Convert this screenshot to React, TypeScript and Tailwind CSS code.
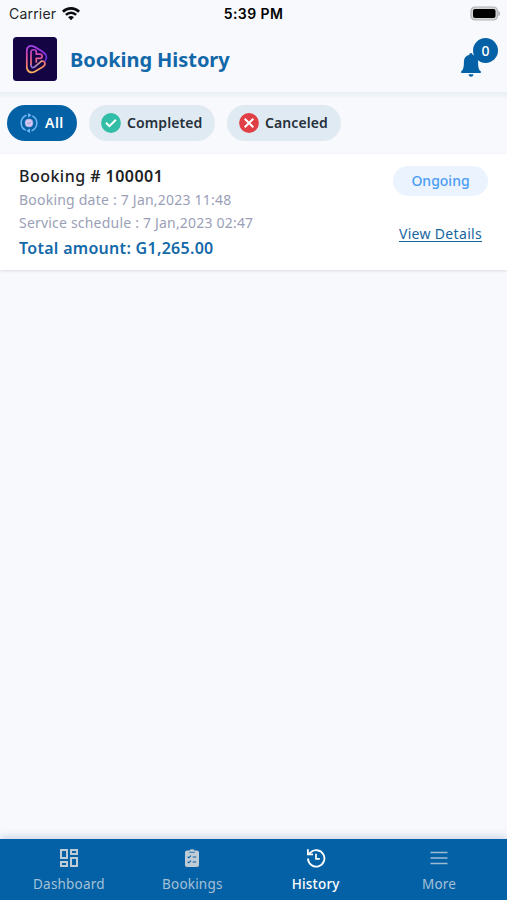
import type { ReactNode } from "react";
import { MdOutlineDashboard } from "react-icons/md";

function Wifi() {
  return (
    <svg className="h-[14px] w-[18px]" viewBox="0 0 18 14" fill="none" stroke="#0b0c0e" strokeWidth="2.6">
      <path d="M.9 4.700C5.500.2 12.500.2 17.100 4.700" />
      <path d="M3.900 7.900C6.800 5 11.200 5 14.100 7.900" />
      <path d="M9 13.200 6.100 10.300C7.800 8.700 10.200 8.700 11.900 10.300Z" fill="#0b0c0e" stroke="none" />
    </svg>
  );
}

function Battery() {
  return (
    <svg className="h-[15px] w-[31px]" viewBox="0 0 31 15">
      <rect x="1" y="1" width="26.5" height="13" rx="4" fill="#d4d5d7" stroke="#b1b3b6" strokeWidth="1.200" />
      <rect x="3" y="3" width="22.500" height="9" rx="2" fill="#000" />
      <path d="M28.800 5.200q1.800 2.300 0 4.600Z" fill="#a7a9ac" stroke="#a7a9ac" strokeWidth=".6" />
    </svg>
  );
}

function Logo() {
  return (
    <svg className="h-11 w-11" viewBox="0 0 44 44" fill="none">
      <defs>
        <linearGradient id="brand" x1="20" y1="8" x2="20" y2="36" gradientUnits="userSpaceOnUse">
          <stop stopColor="#9a40ee" />
          <stop offset=".35" stopColor="#d94ab0" />
          <stop offset=".7" stopColor="#f07a70" />
          <stop offset="1" stopColor="#fbb85c" />
        </linearGradient>
        <linearGradient id="edge" x1="24" y1="12" x2="32" y2="25" gradientUnits="userSpaceOnUse">
          <stop stopColor="#a83be8" />
          <stop offset="1" stopColor="#5a34d8" />
        </linearGradient>
        <linearGradient id="curl" x1="19" y1="28" x2="32" y2="26" gradientUnits="userSpaceOnUse">
          <stop stopColor="#8a6fd8" />
          <stop offset="1" stopColor="#fbb060" />
        </linearGradient>
      </defs>
      <rect width="44" height="44" rx="3.500" fill="#150443" />
      <g strokeWidth="1.700" strokeLinecap="round" strokeLinejoin="round">
        <path d="M21.500 9.800 29 14.200C33.500 17 34.300 20.500 32.500 23.500" stroke="url(#edge)" />
        <path d="M21.500 9.800C17.500 7.500 13.800 9.500 13.800 14V29.500C13.800 35 18 36.700 22 34.400L30 29.700C33.500 27.400 31.800 23.300 28.500 24.200" stroke="url(#brand)" />
        <path d="M18 28V15C18 12 23.300 12 23.300 15V17.200H27C29.800 17.200 29.800 21.300 27 21.300H23.300V25" stroke="url(#brand)" />
        <path d="M18 28C18 30.800 20 31 21.500 30L28.500 24.200" stroke="url(#curl)" />
      </g>
    </svg>
  );
}

function Bell() {
  return (
    <svg className="h-6 w-5" viewBox="0 0 20 24" fill="#0461a5">
      <path d="M10 0c1 0 1.600.7 1.600 1.800 3.600.8 5.500 3.500 5.500 7.100 0 5.100.6 8 2.700 9.300V20H.2v-1.800C2.300 16.900 2.900 14 2.900 8.900c0-3.600 1.900-6.300 5.500-7.100C8.400.7 9 0 10 0ZM7.500 21.200h5c-.3 1.700-1.200 2.500-2.500 2.500s-2.200-.8-2.500-2.500Z" />
    </svg>
  );
}

function AllIcon() {
  return (
    <svg className="h-5 w-5" viewBox="0 0 20 20" fill="none" stroke="#71b9f5" strokeWidth="1.500">
      <path d="M7.500 2.200a8.200 8.200 0 0 0-.8 15M12.500 17.800a8.200 8.200 0 0 0 .8-15" />
      <path d="M9 0v4.600l3.600-2.300ZM11 20v-4.600l-3.600 2.300Z" fill="#71b9f5" stroke="none" />
      <circle cx="10" cy="10" r="3.900" fill="#d9c8ee" stroke="#a6b4ec" strokeWidth=".8" />
      <path d="m8.400 10 1.200 1.200 2.100-2.400" stroke="#8a86cf" strokeWidth=".9" />
    </svg>
  );
}

function CheckIcon() {
  return (
    <svg className="h-5 w-5" viewBox="0 0 20 20" fill="none">
      <circle cx="10" cy="10" r="9.900" fill="#32bea6" />
      <path d="m5 9.800 3.400 3.300 6.500-6.300" stroke="#fff" strokeWidth="2" />
    </svg>
  );
}

function CrossIcon() {
  return (
    <svg className="h-5 w-5" viewBox="0 0 20 20" fill="none">
      <circle cx="10" cy="10" r="9.900" fill="#e04045" />
      <path d="m5.700 5.700 8.600 8.600m0-8.600-8.600 8.600" stroke="#fff" strokeWidth="2" />
    </svg>
  );
}

function ClipboardIcon() {
  return (
    <svg className="h-[18px] w-[14px]" viewBox="0 0 14 18" fill="none">
      <path d="M2 1.500h2.500C5-.1 9-.1 9.500 1.500H12a2 2 0 0 1 2 2V16a2 2 0 0 1-2 2H2a2 2 0 0 1-2-2V3.500a2 2 0 0 1 2-2Z" fill="#bfcbd5" />
      <path d="M4.300 3.300h5.400" stroke="#0461a5" strokeWidth=".8" />
      <path d="m2.600 7.700 1.200 1.100L6 6.600M2.600 12.700l1.200 1.100L6 11.600M7.700 8h3.500M7.700 13h3.500" stroke="#0461a5" strokeWidth="1.100" />
    </svg>
  );
}

function HistoryIcon() {
  return (
    <svg className="h-5 w-5" viewBox="0 0 20 20" fill="none" stroke="#fff" strokeWidth="1.800">
      <path d="M2 10.500A8.200 8.200 0 1 0 4.300 4.700L2.800 6.200" />
      <path d="M1.900 1.300V6.400H7" />
      <path d="M10 5.800v5.100h3.800" strokeWidth="1.700" />
    </svg>
  );
}

function MenuIcon() {
  return (
    <svg className="h-5 w-[18px]" viewBox="0 0 18 20" stroke="#9dbbd3" strokeWidth="1.500">
      <path d="M.5 4.500h17M.5 10h17M.5 15.500h17" />
    </svg>
  );
}

function Chip({ className, icon, children }: { className: string; icon: ReactNode; children: ReactNode }) {
  return (
    <button className={`flex h-9 shrink-0 items-center rounded-full pl-3 text-[14px] font-semibold ${className}`}>
      {icon}
      <span className="ml-[6px] pb-px whitespace-nowrap">{children}</span>
    </button>
  );
}

function NavItem({ className = "text-[#a5c0d6]", icon, children }: { className?: string; icon: ReactNode; children: ReactNode }) {
  return (
    <a className={`flex w-[123.4px] flex-col items-center pt-[7px] text-[13.5px] tracking-[0.2px] ${className}`}>
      <span className="flex h-6 items-center pl-px">{icon}</span>
      <span className="mt-1 pl-px leading-5">{children}</span>
    </a>
  );
}

export default function App() {
  return (
    <div className="flex h-[900px] w-[507px] flex-col overflow-hidden bg-[#f7f9fd] font-['Noto_Sans',sans-serif]">
      <div className="grid h-7 shrink-0 grid-cols-3 items-center pr-[6px] pb-px pl-[9px] font-['Inter',sans-serif] text-[14px] text-[#24262a]">
        <div className="flex items-center gap-[6px]">
          <span className="tracking-[0.2px]">Carrier</span>
          <Wifi />
        </div>
        <span className="pr-[3px] text-center font-semibold tracking-[0.4px] text-black">5:39 PM</span>
        <div className="flex justify-end">
          <Battery />
        </div>
      </div>

      <header className="flex h-16 shrink-0 items-center pr-[9px] pb-[2px] pl-[13px]">
        <Logo />
        <h1 className="ml-[13px] pt-px text-[20px] font-bold tracking-[-0.05px] text-[#1267a9]">Booking History</h1>
        <div className="relative ml-auto h-10 w-[37px]">
          <div className="absolute bottom-[2px] left-0">
            <Bell />
          </div>
          <span className="absolute -top-px right-0 flex h-[25px] w-[25px] items-center justify-center rounded-full bg-[#0461a5] pb-px text-[14px] font-medium text-white">
            0
          </span>
        </div>
      </header>
      <div className="h-[6px] shrink-0 bg-linear-to-b from-[#eaeff4] to-[#f4f7fb]" />

      <div className="flex h-14 shrink-0 items-start gap-3 pt-[7px] pl-[7px]">
        <Chip className="w-[70px] bg-[#0461a5] tracking-[0.5px] text-white" icon={<AllIcon />}>All</Chip>
        <Chip className="w-[126px] bg-[#dfeaf3] tracking-[0.1px] text-[#26303a]" icon={<CheckIcon />}>Completed</Chip>
        <Chip className="w-[114px] bg-[#dfeaf3] tracking-[0.1px] text-[#26303a]" icon={<CrossIcon />}>Canceled</Chip>
      </div>

      <article className="flex h-[116px] shrink-0 justify-between bg-white pr-[19px] pl-[19px] shadow-[0_1px_3px_rgba(40,50,60,0.14)]">
        <div className="flex flex-col pt-[10px] whitespace-nowrap">
          <h2 className="h-6 text-[16px] leading-6 font-medium tracking-[0.47px] text-[#202124]">
            Booking <span className="font-semibold"># 100001</span>
          </h2>
          <p className="h-6 text-[14px] leading-6 tracking-[0.22px] text-[#9a9fb7]">Booking date : 7 Jan,2023 11:48</p>
          <p className="h-6 text-[14px] leading-[22px] tracking-[0.2px] text-[#9a9fb7]">Service schedule : 7 Jan,2023 02:47</p>
          <p className="h-6 text-[16px] leading-6 font-semibold tracking-[0.29px] text-[#1469a9]">Total amount: G1,265.00</p>
        </div>
        <div className="flex flex-col items-center pt-3">
          <span className="flex h-[30px] w-[95px] items-center justify-center rounded-full bg-[#eaf3fe] pb-[2px] text-[14px] font-medium text-[#4a9df3]">
            Ongoing
          </span>
          <a className="mt-[28px] text-[14px] leading-5 tracking-[0.32px] whitespace-nowrap text-[#17659f] underline underline-offset-2">View Details</a>
        </div>
      </article>

      <nav className="mt-auto flex h-[61px] shrink-0 justify-center bg-[#0461a5] shadow-[0_-2px_8px_rgba(70,90,150,0.25)]">
        <NavItem icon={<MdOutlineDashboard size={24} color="#bfcbd5" />}>Dashboard</NavItem>
        <NavItem icon={<ClipboardIcon />}>Bookings</NavItem>
        <NavItem className="font-medium text-white" icon={<HistoryIcon />}>History</NavItem>
        <NavItem icon={<MenuIcon />}>More</NavItem>
      </nav>
    </div>
  );
}
